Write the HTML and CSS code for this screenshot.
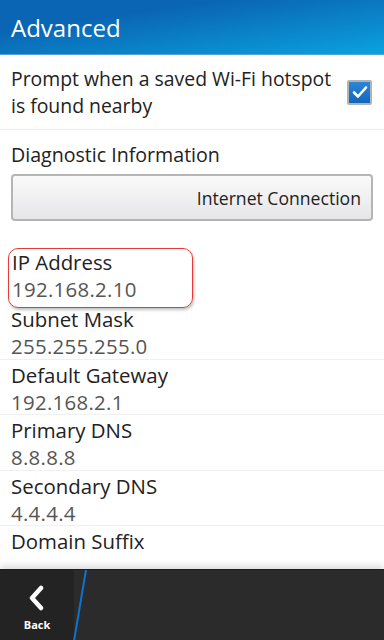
FILE: index.html
```html
<!DOCTYPE html>
<html lang="en">
<head>
  <meta charset="UTF-8" />
  <meta name="viewport" content="width=device-width, initial-scale=1.0"/>
  <title>Advanced</title>
  <link rel="stylesheet" href="styles.css">
</head>
<body>

  <header class="title-bar">Advanced</header>

  <div class="content">

    <!-- Hotspot prompt -->
    <div class="toggle-row">
      <p>Prompt when a saved Wi-Fi hotspot is found nearby</p>
      <span class="checkbox">
        <svg width="18" height="18" viewBox="0 0 18 18"><path d="M3 9.5 L7 13.5 L15 4.5" fill="none" stroke="#fff" stroke-width="2.6" stroke-linecap="round" stroke-linejoin="round"/></svg>
      </span>
    </div>

    <!-- Diagnostics -->
    <div class="diagnostic">
      <h3>Diagnostic Information</h3>
      <button class="dropdown">Internet Connection</button>
    </div>

    <!-- Network info -->
    <div class="info-list">
      <div class="info-row selected">
        <span class="label">IP Address</span>
        <span class="value">192.168.2.10</span>
      </div>
      <div class="info-row">
        <span class="label">Subnet Mask</span>
        <span class="value">255.255.255.0</span>
      </div>
      <div class="info-row">
        <span class="label">Default Gateway</span>
        <span class="value">192.168.2.1</span>
      </div>
      <div class="info-row">
        <span class="label">Primary DNS</span>
        <span class="value">8.8.8.8</span>
      </div>
      <div class="info-row">
        <span class="label">Secondary DNS</span>
        <span class="value">4.4.4.4</span>
      </div>
      <div class="info-row">
        <span class="label">Domain Suffix</span>
      </div>
    </div>

  </div>

  <footer class="action-bar">
    <div class="back">
      <svg width="24" height="26" viewBox="0 0 24 26"><path d="M16 3 L7 13 L16 23" fill="none" stroke="#fff" stroke-width="4.5" stroke-linecap="round" stroke-linejoin="round"/></svg>
      <span>Back</span>
    </div>
    <svg class="divider" width="20" height="71" viewBox="0 0 20 71"><path d="M14 0 L2 71" stroke="#0a74d0" stroke-width="2"/></svg>
  </footer>

</body>
</html>
```

FILE: styles.css
```css
* {
  box-sizing: border-box;
  margin: 0;
  padding: 0;
  font-family: 'Open Sans', sans-serif;
}

body {
  width: 384px;
  height: 640px;
  overflow: hidden;
  background: #fff;
  color: #222;
  display: flex;
  flex-direction: column;
}

.title-bar {
  height: 55px;
  background: linear-gradient(to bottom right, #0a66b4 30%, #0aa2df);
  border-bottom: 1px solid #5c9fd4;
  color: #fff;
  font-size: 24px;
  padding: 11px 11px 0;
}

.content {
  flex: 1;
  overflow: hidden;
}

/* Hotspot prompt */
.toggle-row {
  display: flex;
  align-items: center;
  justify-content: space-between;
  height: 75px;
  padding: 0 12px 0 11px;
  border-bottom: 1px solid #ececec;
}

.toggle-row p {
  font-size: 19.4px;
  line-height: 27px;
  width: 330px;
}

.checkbox {
  width: 25px;
  height: 25px;
  border: 2px solid #b3b3b3;
  border-radius: 2px;
  background: linear-gradient(#2a86d8, #1168bb);
  display: flex;
  align-items: center;
  justify-content: center;
}

/* Diagnostics */
.diagnostic {
  padding: 12px 11px 0;
}

.diagnostic h3 {
  font-size: 19.6px;
  font-weight: 400;
  line-height: 26px;
  margin-bottom: 6px;
}

.dropdown {
  display: block;
  width: 362px;
  height: 47px;
  border: 2px solid #b5b5b5;
  border-radius: 4px;
  background: linear-gradient(#fafafa, #e6e6e9);
  text-align: right;
  padding-right: 10px;
  font-size: 17.6px;
  color: #222;
}

/* Network info */
.info-list {
  margin-top: 27px;
}

.info-row {
  display: flex;
  flex-direction: column;
  height: 55.5px;
  padding: 2px 11px 0;
  border-bottom: 1px solid #f0f0f0;
}

.info-row .label {
  font-size: 20.4px;
  line-height: 27px;
}

.info-row .value {
  font-size: 20.4px;
  line-height: 27px;
  color: #555;
  letter-spacing: 0.3px;
}

.info-row.selected {
  width: 185px;
  margin-left: 8px;
  padding: 0 3px 0;
  border: 1.5px solid #e53a3a;
  border-radius: 10px;
  box-shadow: 1px 2px 3px rgba(0, 0, 0, 0.25);
  height: 60px;
  margin-bottom: -4px;
  position: relative;
  z-index: 1;
}

/* Bottom bar */
.action-bar {
  height: 71px;
  background: #2b2b2b;
  border-top: 1px solid #1c1c1c;
  box-shadow: 0 -4px 6px rgba(0, 0, 0, 0.12);
  display: flex;
  color: #fff;
}

.back {
  width: 74px;
  display: flex;
  flex-direction: column;
  align-items: center;
  padding-top: 15px;
  background: #232323;
}

.back span {
  font-size: 11px;
  font-weight: 700;
  margin-top: 6px;
}

.divider {
  margin-left: -2px;
}
```
